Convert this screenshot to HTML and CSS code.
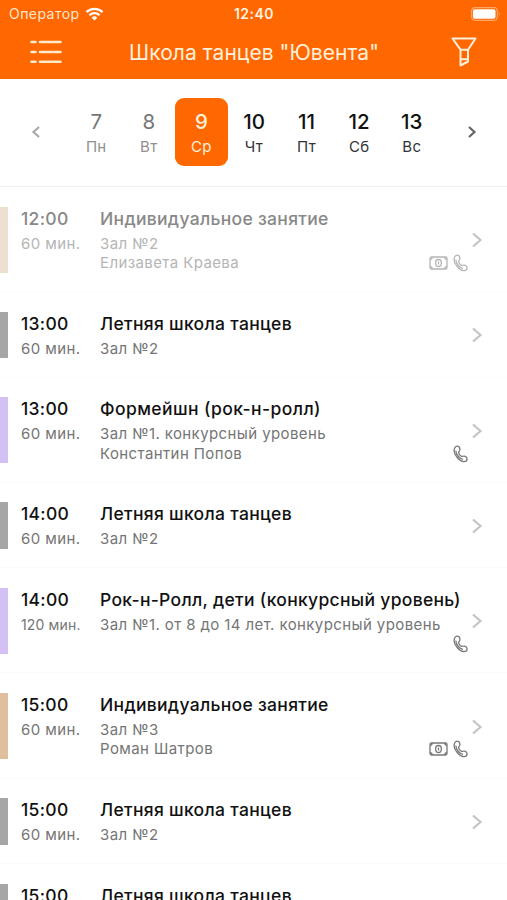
FILE: index.html
```html
<!DOCTYPE html>
<html lang="ru">
<head>
    <meta charset="UTF-8">
    <meta name="viewport" content="width=device-width, initial-scale=1.0">
    <title>Школа танцев "Ювента"</title>
    <link rel="stylesheet" href="styles.css">
</head>
<body>
    <svg class="sprite">
        <symbol id="phone" viewBox="0 0 15 18">
            <path d="M1.2 4.6C1.6 2.2 3.2.9 4.5 1.2 6 1.5 7 3.400 6.900 5c-.1 1.300-1.500 1.500-1.300 2.700.2 1.300 1.700 3.200 2.900 3.700 1.200.4 1.800-.7 3.100-.3 1.300.4 2.600 1.700 2.500 2.900-.1 1.500-1.500 2.800-3.400 2.700C6.400 16.400.400 9.600 1.200 4.600z"/>
            <path d="M2.900 5.600c-.2 3.600 3.600 8.600 7.200 8.700"/>
        </symbol>
        <symbol id="money" viewBox="0 0 19 14">
            <rect x="1" y="1" width="17" height="12" rx="1.500"/>
            <path d="M1 3.400C2.400 3.400 3.200 2.500 3.200 1M15.800 1c0 1.500.8 2.400 2.200 2.400M1 10.600c1.400 0 2.200.9 2.200 2.400M15.800 13c0-1.500.8-2.400 2.200-2.400"/>
            <ellipse cx="9.500" cy="7" rx="2.900" ry="3.500"/>
            <path d="M9.500 5.500v3"/>
        </symbol>
        <symbol id="chevron" viewBox="0 0 12 16">
            <path d="M2 1.500L9.500 8 2 14.500"/>
        </symbol>
    </svg>

    <header class="header">
        <div class="status">
            <div class="carrier">
                <span>Оператор</span>
                <svg class="wifi" viewBox="0 0 18 14">
                    <path d="M1 5.100a11.500 11.500 0 0 1 16 0M3.900 8.200a7.300 7.300 0 0 1 10.200 0"/>
                    <path class="dot" d="M9 13.600L6.100 10.700a4.100 4.100 0 0 1 5.800 0z"/>
                </svg>
            </div>
            <div class="clock">12:40</div>
            <svg class="battery" viewBox="0 0 30 14">
                <rect class="shell" x=".7" y=".7" width="25.600" height="12.600" rx="3.500"/>
                <rect class="level" x="2" y="2.300" width="22.500" height="9.400" rx="2"/>
                <path class="cap" d="M27.800 4.800q2 2.200 0 4.400z"/>
            </svg>
        </div>
        <div class="navbar">
            <svg class="menu-icon" viewBox="0 0 32 24">
                <path d="M1.500 2h4M10 2h20.500M1.500 12h4M10 12h20.500M1.500 21.700h4M10 21.700h20.500"/>
            </svg>
            <h1>Школа танцев "Ювента"</h1>
            <svg class="filter-icon" viewBox="0 0 26 30">
                <path d="M1.500 1.500h23L17 12.700v11.800l-7.500 4V12.700zM9.500 12.700H17M9.500 22.200H17"/>
            </svg>
        </div>
    </header>

    <nav class="week">
        <svg class="arrow prev" viewBox="0 0 10 14"><path d="M8 2L2.500 7 8 12"/></svg>
        <div class="days">
            <div class="day past"><b>7</b><span>Пн</span></div>
            <div class="day past"><b>8</b><span>Вт</span></div>
            <div class="day active"><b>9</b><span>Ср</span></div>
            <div class="day"><b>10</b><span>Чт</span></div>
            <div class="day"><b>11</b><span>Пт</span></div>
            <div class="day"><b>12</b><span>Сб</span></div>
            <div class="day"><b>13</b><span>Вс</span></div>
        </div>
        <svg class="arrow next" viewBox="0 0 10 14"><path d="M2 2l5.500 5L2 12"/></svg>
    </nav>

    <main class="schedule">
        <div class="lesson tall beige past">
            <div class="when"><b>12:00</b><span>60 мин.</span></div>
            <div class="info"><h2>Индивидуальное занятие</h2><p>Зал №2</p><p>Елизавета Краева</p></div>
            <div class="icons"><svg class="money"><use href="#money"/></svg><svg class="phone"><use href="#phone"/></svg></div>
            <svg class="chevron"><use href="#chevron"/></svg>
        </div>
        <div class="lesson gray">
            <div class="when"><b>13:00</b><span>60 мин.</span></div>
            <div class="info"><h2>Летняя школа танцев</h2><p>Зал №2</p></div>
            <svg class="chevron"><use href="#chevron"/></svg>
        </div>
        <div class="lesson tall violet">
            <div class="when"><b>13:00</b><span>60 мин.</span></div>
            <div class="info"><h2 class="wide">Формейшн (рок-н-ролл)</h2><p>Зал №1. конкурсный уровень</p><p>Константин Попов</p></div>
            <div class="icons"><svg class="phone"><use href="#phone"/></svg></div>
            <svg class="chevron"><use href="#chevron"/></svg>
        </div>
        <div class="lesson gray">
            <div class="when"><b>14:00</b><span>60 мин.</span></div>
            <div class="info"><h2>Летняя школа танцев</h2><p>Зал №2</p></div>
            <svg class="chevron"><use href="#chevron"/></svg>
        </div>
        <div class="lesson tall violet">
            <div class="when"><b>14:00</b><span class="long">120 мин.</span></div>
            <div class="info"><h2>Рок-н-Ролл, дети (конкурсный уровень)</h2><p>Зал №1. от 8 до 14 лет. конкурсный уровень</p></div>
            <div class="icons"><svg class="phone"><use href="#phone"/></svg></div>
            <svg class="chevron"><use href="#chevron"/></svg>
        </div>
        <div class="lesson tall beige">
            <div class="when"><b>15:00</b><span>60 мин.</span></div>
            <div class="info"><h2>Индивидуальное занятие</h2><p>Зал №3</p><p>Роман Шатров</p></div>
            <div class="icons"><svg class="money"><use href="#money"/></svg><svg class="phone"><use href="#phone"/></svg></div>
            <svg class="chevron"><use href="#chevron"/></svg>
        </div>
        <div class="lesson gray">
            <div class="when"><b>15:00</b><span>60 мин.</span></div>
            <div class="info"><h2>Летняя школа танцев</h2><p>Зал №2</p></div>
            <svg class="chevron"><use href="#chevron"/></svg>
        </div>
        <div class="lesson gray last">
            <div class="when"><b>15:00</b></div>
            <div class="info"><h2>Летняя школа танцев</h2></div>
        </div>
    </main>
</body>
</html>
```

FILE: styles.css
```css
* { box-sizing: border-box; }
body { margin: 0; height: 900px; overflow: hidden; background: #fff; color: #111; font-family: Inter, "Liberation Sans", sans-serif; }
h1, h2, p { margin: 0; white-space: nowrap; }
svg { display: block; fill: none; flex-shrink: 0; }
.sprite { display: none; }

.header { height: 79px; background: #ff6700; color: #fff; }
.status { height: 27px; display: grid; grid-template-columns: 1fr auto 1fr; align-items: center; padding: 0 6px 0 9px; }
.carrier { display: flex; align-items: center; gap: 5px; font-size: 14px; letter-spacing: 0.45px; color: #ffe6cf; }
.wifi { width: 19px; height: 14px; stroke: #fff; stroke-width: 2.3; }
.wifi .dot { fill: #fff; stroke: none; }
.clock { padding-right: 2px; font-size: 14px; font-weight: 600; letter-spacing: 0.5px; color: #fff1e2; }
.battery { width: 30px; height: 14px; justify-self: end; }
.battery .shell { stroke: #ffa667; stroke-width: 1.2; }
.battery .level { fill: #fff; }
.battery .cap { fill: #ffa667; }
.navbar { height: 50px; display: flex; align-items: center; justify-content: space-between; padding: 0 30px; }
.menu-icon { width: 32px; height: 24px; stroke: #ffeacb; stroke-width: 2.6; stroke-linecap: round; }
.navbar h1 { padding-right: 5px; font-size: 21px; font-weight: 400; letter-spacing: 0.05px; color: #fff0dc; }
.filter-icon { width: 26px; height: 30px; stroke: #fff0dc; stroke-width: 2; stroke-linejoin: round; }

.week { height: 108px; display: flex; align-items: center; justify-content: space-between; padding: 0 30px 1px 31px; border-bottom: 1px solid #f0f0f0; }
.arrow { width: 10px; height: 14px; stroke: #666; stroke-width: 2.2; }
.arrow.prev { stroke: #aaa; }
.days { display: flex; }
.day { width: 52.6px; height: 68px; padding-top: 11px; border-radius: 9px; text-align: center; }
.day b { display: block; font-size: 20.5px; line-height: 26px; font-weight: 500; }
.day span { display: block; font-size: 15px; line-height: 24px; letter-spacing: 0.3px; color: #333; }
.day.past b { font-weight: 400; color: #777; }
.day.past span { color: #909090; }
.day.active, .day.active span { background: #ff6700; color: #fff0dc; }

.lesson { height: 85.6px; padding: 19.5px 0; display: flex; position: relative; border-bottom: 1px solid #fbfbfb; }
.lesson.tall { height: 105.1px; }
.lesson.last { height: auto; padding-bottom: 0; border-bottom: 0; }
.lesson::before { content: ""; width: 8px; height: 46.5px; background: #a6a6a6; }
.lesson.tall::before { height: 66px; }
.lesson.violet::before { background: #d3c1f5; }
.lesson.beige::before { background: #dfbf9c; }
.lesson.past::before { background: #eee0d0; }
.when { width: 92px; padding-left: 13px; }
.when b, .info h2 { display: block; font-size: 17.5px; line-height: 23px; font-weight: 500; letter-spacing: 0.31px; margin-bottom: 4px; }
.info .wide { letter-spacing: 0.42px; }
.when span, .info p { display: block; font-size: 15px; line-height: 19.5px; letter-spacing: 0.4px; color: #757575; white-space: nowrap; }
.when .long { font-size: 14px; letter-spacing: 0.15px; }
.info { flex: 1; }
/* icons sit on the last text line, over the end of the info column */
.icons { position: absolute; right: 39px; top: 67px; display: flex; gap: 5px; }
.icons svg { stroke: #777; stroke-width: 1.3; }
.phone { width: 15px; height: 18px; }
.money { width: 19px; height: 14px; margin-top: 2px; }
.chevron { position: absolute; right: 24px; top: calc(50% - 7px); width: 12px; height: 16px; stroke: #c4c4c4; stroke-width: 2.2; }
.past .when b, .past .info h2 { color: #888; }
.past .when span, .past .info p { color: #b5b5b5; }
.past .icons svg { stroke: #b5b5b5; }
```
